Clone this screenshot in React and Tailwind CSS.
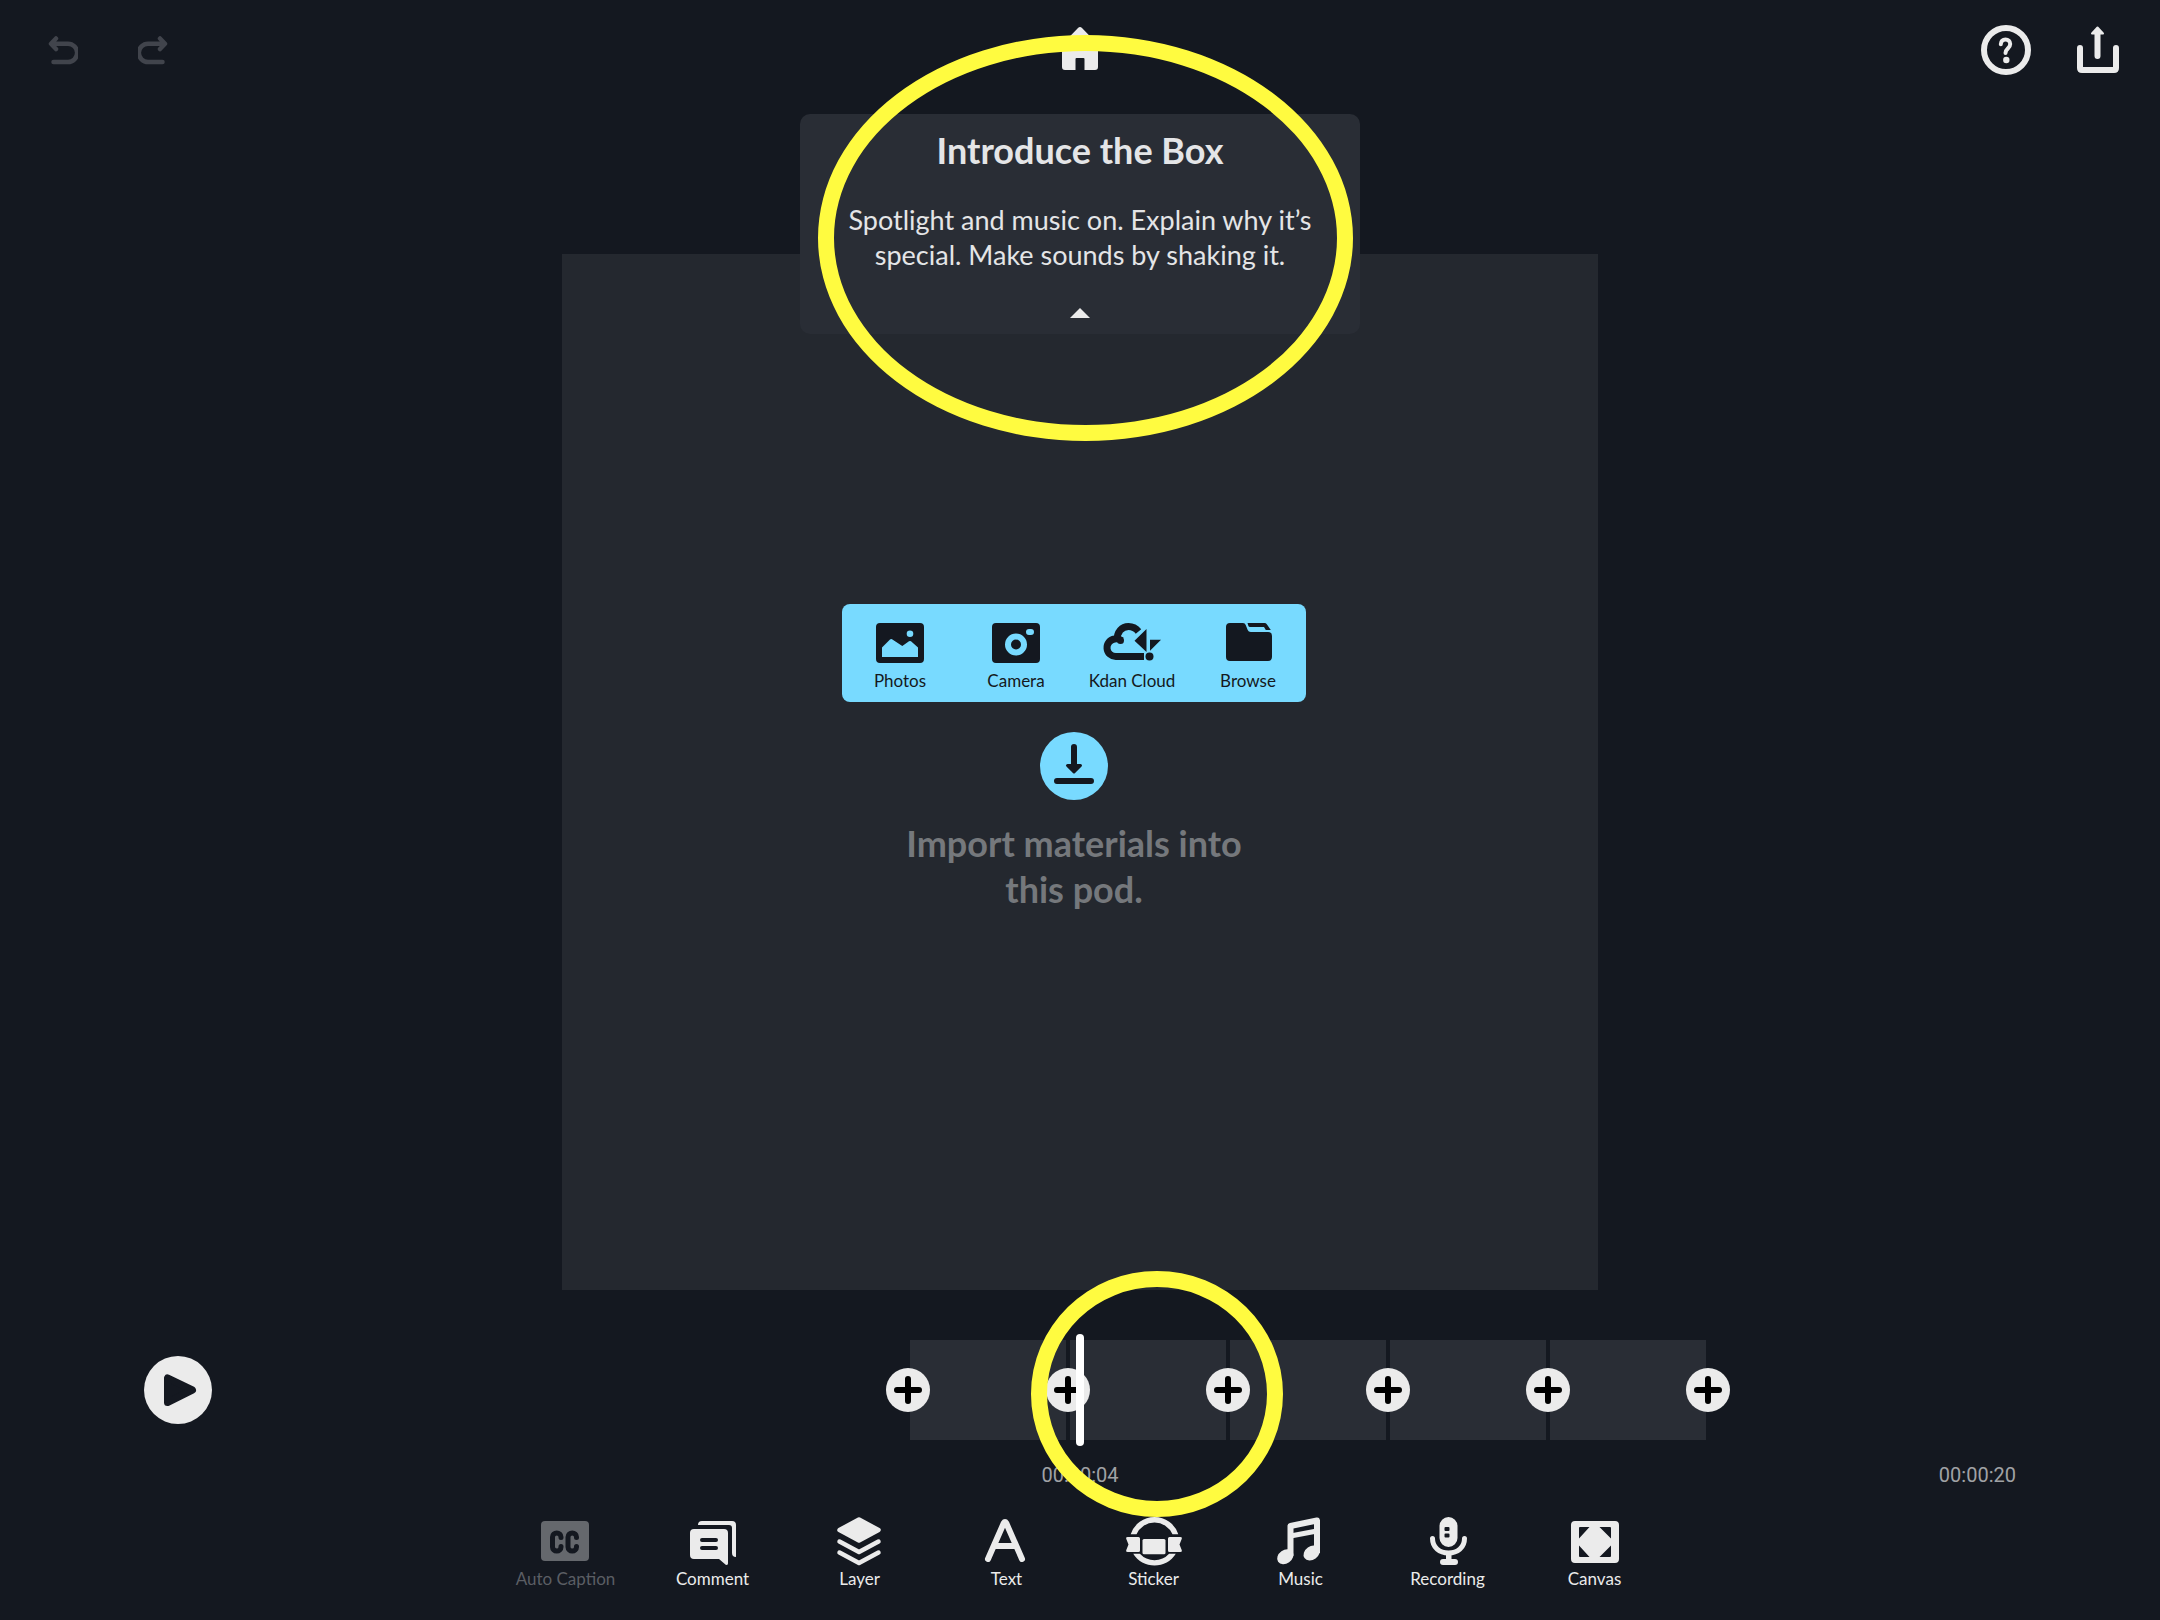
import React from 'react';

const importSources = [
  { label: 'Photos', icon: PhotosIcon },
  { label: 'Camera', icon: CameraIcon },
  { label: 'Kdan Cloud', icon: CloudIcon },
  { label: 'Browse', icon: FolderIcon },
];

const tools = [
  { label: 'Auto Caption', icon: CaptionIcon, disabled: true },
  { label: 'Comment', icon: CommentIcon },
  { label: 'Layer', icon: LayerIcon },
  { label: 'Text', icon: TextIcon },
  { label: 'Sticker', icon: StickerIcon },
  { label: 'Music', icon: MusicIcon },
  { label: 'Recording', icon: RecordingIcon },
  { label: 'Canvas', icon: CanvasIcon },
];

const pods = [1, 2, 3, 4, 5];

function PhotosIcon() {
  return (
    <svg viewBox="0 0 60 40" className="w-[60px] h-10" fill="currentColor" aria-hidden="true">
      <path
        fillRule="evenodd"
        d="M10 0h40a4 4 0 0 1 4 4v32a4 4 0 0 1-4 4H10a4 4 0 0 1-4-4V4a4 4 0 0 1 4-4zM12 24.5V34h36v-9.5l-7-6.2q-1-.8-2 0L32.3 23 22 16.2q-1-.6-2 .3zM43.3 10.7a3.3 3.3 0 1 0-6.6 0 3.3 3.3 0 1 0 6.6 0z"
      />
    </svg>
  );
}

function CameraIcon() {
  return (
    <svg viewBox="0 0 60 40" className="w-[60px] h-10" fill="currentColor" aria-hidden="true">
      <path
        fillRule="evenodd"
        d="M10 0h40a4 4 0 0 1 4 4v32a4 4 0 0 1-4 4H10a4 4 0 0 1-4-4V4a4 4 0 0 1 4-4zM41 21.5a11 11 0 1 0-22 0 11 11 0 1 0 22 0zM43 6a3 3 0 0 0 0 6h2a3 3 0 0 0 0-6z"
      />
      <circle cx="30" cy="21.5" r="5" />
    </svg>
  );
}

function CloudIcon() {
  return (
    <svg viewBox="0 0 60 40" className="w-[60px] h-10" fill="currentColor" aria-hidden="true">
      <path
        fill="none"
        stroke="currentColor"
        strokeWidth="7"
        d="M42 33.5H14a8.8 8.8 0 0 1-1.5-17.5q4-1 7 1.500"
      />
      <path fill="none" stroke="currentColor" strokeWidth="7" d="M15.500 17C14.500 9 20 3.500 26.500 3.500q6 0 10 5" />
      <circle cx="18.500" cy="17.500" r="3.500" />
      <path d="M32.500 17.700 44.500 6v23zM48 16.700h11L48 27.700z" />
      <circle cx="47.500" cy="33.500" r="4" />
    </svg>
  );
}

function FolderIcon() {
  return (
    <svg viewBox="0 0 60 40" className="w-[60px] h-10" fill="currentColor" aria-hidden="true">
      <path d="M12 0h13q2 0 2.7 2l2 5q.8 2 3 2H50a4 4 0 0 1 4 4v21a4 4 0 0 1-4 4H12a4 4 0 0 1-4-4V4a4 4 0 0 1 4-4z" />
      <path d="M29.5 0H46.5q1.5 0 2.3 1.2L52.8 7h-5L46 4H32q-1.2 0-1.6-1z" />
    </svg>
  );
}

function CaptionIcon() {
  return (
    <svg viewBox="0 0 59 56" className="w-[59px] h-14" fill="none" aria-hidden="true">
      <rect x="5" y="8" width="48" height="40" rx="4" fill="#65686d" />
      <g stroke="#141820" strokeWidth="5" strokeLinecap="round">
        <path d="M25 24.5v-.5a4.25 4 0 0 0-8.5 0v10a4.25 4 0 0 0 8.5 0v-.5" />
        <path d="M40.5 24.5v-.5a4.25 4 0 0 0-8.5 0v10a4.25 4 0 0 0 8.5 0v-.5" />
      </g>
    </svg>
  );
}

function CommentIcon() {
  return (
    <svg viewBox="0 0 59 56" className="w-[59px] h-14" fill="currentColor" aria-hidden="true">
      <path
        fillRule="evenodd"
        d="M11 16h30a4 4 0 0 1 4 4v30.5q0 1.5-2 1.5L36 46H11a4 4 0 0 1-4-4V20a4 4 0 0 1 4-4zM19 25a2 2 0 0 0 0 4h14a2 2 0 0 0 0-4zM19 33a2 2 0 0 0 0 4h14a2 2 0 0 0 0-4z"
      />
      <path d="M15 12q0-4 4-4h30a4 4 0 0 1 4 4v32q-4 0-4-4V15a3 3 0 0 0-3-3z" />
    </svg>
  );
}

function LayerIcon() {
  return (
    <svg
      viewBox="0 0 59 56"
      className="w-[59px] h-14"
      fill="none"
      stroke="currentColor"
      strokeWidth="4.5"
      strokeLinecap="round"
      strokeLinejoin="round"
      aria-hidden="true"
    >
      <path fill="currentColor" d="M29 6.5 48.5 17 29 27.5 9.5 17z" />
      <path d="M9.5 28.500 29 39l19.500-10.500M9.500 39.500 29 50l19.500-10.500" />
    </svg>
  );
}

function TextIcon() {
  return (
    <svg
      viewBox="0 0 59 56"
      className="w-[59px] h-14"
      fill="none"
      stroke="currentColor"
      strokeWidth="6"
      strokeLinecap="round"
      strokeLinejoin="round"
      aria-hidden="true"
    >
      <path d="M11 46 26.8 10q1.2-2 2.4 0L45 46M17 33h22" />
    </svg>
  );
}

function StickerIcon() {
  return (
    <svg viewBox="0 0 59 56" className="w-[59px] h-14" fill="currentColor" aria-hidden="true">
      <path d="M6.7 21.3a25 25 0 0 1 47.6 0h-5.8a19.6 19.6 0 0 0-36 0z" />
      <path d="M9.2 40.7a25 25 0 0 0 42.6 0h-6.7a19.6 19.6 0 0 1-29.2 0z" />
      <rect x="18.5" y="26" width="23" height="15.3" rx="1.5" />
      <path d="M3.5 24H14.5q1.5 0 1.5 1.5v12q0 1.5-1.5 1.5h-11q-2 0-1.3-1.8L4.5 31.5 2.2 25.8Q1.5 24 3.5 24z" />
      <path d="M56.5 24H45.5q-1.5 0-1.5 1.5v12q0 1.5 1.5 1.5h11q2 0 1.3-1.8L55.5 31.5 57.8 25.8Q58.5 24 56.5 24z" />
    </svg>
  );
}

function MusicIcon() {
  return (
    <svg viewBox="0 0 59 56" className="w-[59px] h-14" fill="currentColor" aria-hidden="true">
      <path
        d="M19.5 43V13L46 7.5V40"
        fill="none"
        stroke="currentColor"
        strokeWidth="6"
        strokeLinejoin="round"
      />
      <path d="M19.5 23 46 18" fill="none" stroke="currentColor" strokeWidth="5" />
      <ellipse cx="14.3" cy="43.8" rx="8.8" ry="6.7" transform="rotate(-35 14.3 43.8)" />
      <ellipse cx="40.7" cy="40" rx="8.8" ry="6.7" transform="rotate(-35 40.7 40)" />
    </svg>
  );
}

function RecordingIcon() {
  return (
    <svg viewBox="0 0 59 56" className="w-[59px] h-14" fill="currentColor" aria-hidden="true">
      <path
        fillRule="evenodd"
        d="M21.5 13a9 9 0 0 1 18 0v12a9 9 0 0 1-18 0zM27.5 14q-1 0-1 1v2q0 1 1 1h3q1 0 1-1v-2q0-1-1-1zM27.5 20.5q-1 0-1 1v2q0 1 1 1h3q1 0 1-1v-2q0-1-1-1z"
      />
      <path
        d="M14.5 25.5c0 9 7 14.5 16 14.5s16-5.5 16-14.5"
        fill="none"
        stroke="currentColor"
        strokeWidth="5"
        strokeLinecap="round"
      />
      <path d="M28 41h5.5v5H37a3 3 0 0 1 0 6H25a3 3 0 0 1 0-6h3z" />
    </svg>
  );
}

function CanvasIcon() {
  return (
    <svg viewBox="0 0 59 56" className="w-[59px] h-14" fill="currentColor" aria-hidden="true">
      <path
        fillRule="evenodd"
        d="M10 8h40a4 4 0 0 1 4 4v34a4 4 0 0 1-4 4H10a4 4 0 0 1-4-4V12a4 4 0 0 1 4-4zM15 14q-1 0-1 1v10.5L24.5 14zM34.5 14 46 25.5V15q0-1-1-1zM14 32.5V43q0 1 1 1h9.5zM46 32.5 34.5 44H45q1 0 1-1z"
      />
    </svg>
  );
}

function Header() {
  return (
    <header className="grid grid-cols-3 items-center h-[100px] px-12">
      <div className="flex items-center gap-15 text-[#41444c]">
        <button type="button" aria-label="Undo" disabled>
          <svg viewBox="0 0 30 30" className="w-[30px] h-[30px]" fill="none" stroke="currentColor" strokeWidth="4.5" strokeLinecap="round" strokeLinejoin="round">
            <path d="M8 3.5 3 8.700l5 5.300M3.500 8.700h16.500a9 9 0 0 1 0 18.300H5.500" />
          </svg>
        </button>
        <button type="button" aria-label="Redo" disabled>
          <svg viewBox="0 0 30 30" className="w-[30px] h-[30px]" fill="none" stroke="currentColor" strokeWidth="4.5" strokeLinecap="round" strokeLinejoin="round">
            <path d="M22 3.500l5 5.200-5 5.300M26.500 8.700H10a9 9 0 0 0 0 18.300h14.500" />
          </svg>
        </button>
      </div>
      <button type="button" aria-label="Home" className="justify-self-center">
        <svg viewBox="0 0 36 46" className="w-9 h-[46px]" fill="currentColor">
          <path d="M16 1q2-2 4 0l14.5 15q1.500 1.500 1 3L36 24v16q0 3-3 3H22.500V32q0-1-1-1h-7q-1 0-1 1v11H3q-3 0-3-3V24l.5-5q-.5-1.500 1-3z" />
        </svg>
      </button>
      <div className="-mr-[7px] flex items-center justify-end gap-[46px]">
        <button type="button" aria-label="Help">
          <svg viewBox="0 0 50 50" className="w-[50px] h-[50px]" fill="none" stroke="currentColor">
            <circle cx="25" cy="25" r="22" strokeWidth="6" />
            <path d="M19.8 19.3c0-3 2-4.8 4.700-4.800s4.700 1.900 4.700 4.500c0 4.500-4.700 4.500-4.700 9" strokeWidth="4" strokeLinecap="round" />
            <circle cx="25.3" cy="35" r="3.2" fill="currentColor" stroke="none" />
          </svg>
        </button>
        <button type="button" aria-label="Share">
          <svg viewBox="0 0 42 50" className="w-[42px] h-[50px]" fill="none" stroke="currentColor" strokeWidth="6" strokeLinecap="round" strokeLinejoin="round">
            <path d="M3 23v20q0 2 2 2h32q2 0 2-2V23M20.500 8v23" />
            <path d="M20.500 2.500 26 8.500H15z" fill="currentColor" strokeWidth="2" />
          </svg>
        </button>
      </div>
    </header>
  );
}

function HintCard() {
  return (
    <section className="absolute left-1/2 top-[114px] -translate-x-1/2 w-[560px] flex flex-col items-center rounded-[10px] bg-[#292d35] px-8 pt-4 pb-4 text-center text-[#e4e5e7]">
      <h1 className="text-[36px] leading-10 font-bold">Introduce the Box</h1>
      <p className="mt-8 text-[27px] leading-[35px] whitespace-nowrap">
        Spotlight and music on. Explain why it’s
        <br />
        special. Make sounds by shaking it.
      </p>
      <button type="button" aria-label="Collapse" className="mt-9 text-[#ebebeb]">
        <svg viewBox="0 0 20 10" className="w-5 h-[10px]" fill="currentColor">
          <path d="M10 0l10 10H0z" />
        </svg>
      </button>
    </section>
  );
}

function PodCanvas() {
  return (
    <main className="mx-auto w-full max-w-[1036px] aspect-square bg-[#24282f] pt-[350px] pr-3 flex flex-col items-center">
      <div className="grid grid-cols-4 w-[464px] rounded-lg bg-[#78daff] text-[#141820]">
        {importSources.map(({ label, icon: Icon }) => (
          <button key={label} type="button" className="flex flex-col items-center pt-[19px] pb-[9px]">
            <Icon />
            <span className="mt-[6px] text-[17px] leading-6 whitespace-nowrap">{label}</span>
          </button>
        ))}
      </div>
      <button type="button" aria-label="Import" className="mt-[30px] rounded-full bg-[#78daff] text-[#141820]">
        <svg viewBox="0 0 68 68" className="w-17 h-17" fill="none" stroke="currentColor" strokeWidth="6" strokeLinecap="round" strokeLinejoin="round">
          <path d="M34 15v18M17 49h34" />
          <path d="M27.500 33.500h13L34 40z" fill="currentColor" strokeWidth="3" />
        </svg>
      </button>
      <p className="mt-5 text-center text-[36px] leading-[46px] font-bold text-[#75787c]">
        Import materials into
        <br />
        this pod.
      </p>
    </main>
  );
}

function AddButton() {
  return (
    <button
      type="button"
      aria-label="Add pod"
      className="absolute -left-6 top-7 w-11 h-11 rounded-full bg-[#ebebeb] text-black"
    >
      <svg viewBox="0 0 44 44" className="w-11 h-11" stroke="currentColor" strokeWidth="6" strokeLinecap="round">
        <path d="M22 11v22M11 22h22" />
      </svg>
    </button>
  );
}

function Timeline() {
  return (
    <section className="mt-11">
      <div className="relative grid grid-cols-2 items-center py-[6px]">
        <button type="button" aria-label="Play" className="ml-36 w-17 h-17 rounded-full bg-[#ebebeb] text-[#141820]">
          <svg viewBox="0 0 68 68" className="w-17 h-17" fill="currentColor" stroke="currentColor" strokeWidth="7" strokeLinejoin="round">
            <path d="M23.500 22v24.500L48.500 34z" />
          </svg>
        </button>
        <div className="-ml-[170px] flex gap-1">
          {pods.map((pod) => (
            <div key={pod} className="relative w-[156px] h-[100px] shrink-0 bg-[#292d35]">
              <AddButton />
            </div>
          ))}
          <div className="relative h-[100px]">
            <AddButton />
          </div>
        </div>
        <div className="absolute left-1/2 inset-y-0 w-2 -translate-x-1/2 rounded-full bg-white" />
      </div>
      <div className="mt-[17px] grid grid-cols-3 px-36 font-[Roboto,sans-serif] text-[20px] leading-6 text-[#a0a2a5]">
        <span className="col-start-2 text-center">00:00:04</span>
        <span className="text-right">00:00:20</span>
      </div>
    </section>
  );
}

function Toolbar() {
  return (
    <nav className="mx-auto mt-[26px] grid w-full max-w-[1176px] grid-cols-8">
      {tools.map(({ label, icon: Icon, disabled }) => (
        <button
          key={label}
          type="button"
          disabled={disabled}
          className="flex flex-col items-center disabled:text-[#5b5e64]"
        >
          <Icon />
          <span className="text-[17px] leading-5 whitespace-nowrap">{label}</span>
        </button>
      ))}
    </nav>
  );
}

export default function App() {
  return (
    <div className="relative min-h-screen overflow-hidden bg-[#141820] pb-6 font-[Lato,sans-serif] text-[#ebebeb]">
      <Header />
      <div className="pt-[154px]">
        <PodCanvas />
      </div>
      <HintCard />
      <Timeline />
      <Toolbar />

      {/* highlight rings */}
      <div className="pointer-events-none absolute left-1/2 top-[35px] ml-[-262px] h-[406px] w-[535px] rounded-[50%] border-[16px] border-[#fffb40]" />
      <div className="pointer-events-none absolute left-1/2 top-[1271px] ml-[-49px] h-[246px] w-[252px] rounded-[50%] border-[16px] border-[#fffb40]" />
    </div>
  );
}
